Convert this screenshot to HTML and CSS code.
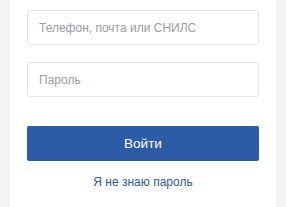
FILE: index.html
```html
<!DOCTYPE html>
<html lang="ru">
<head>
    <meta charset="UTF-8">
    <meta name="viewport" content="width=device-width, initial-scale=1.0">
    <title>Вход</title>
    <link rel="stylesheet" href="styles.css">
</head>
<body>
    <div class="card">
        <input type="text" class="field" placeholder="Телефон, почта или СНИЛС">
        <input type="password" class="field" placeholder="Пароль">
        <button class="login">Войти</button>
        <a href="#" class="forgot">Я не знаю пароль</a>
    </div>
</body>
</html>
```

FILE: styles.css
```css
body {
    margin: 0;
    background-color: #f4f5f7;
    font-family: "Liberation Sans", Arial, sans-serif;
}
.card {
    margin: 0 10px;
    height: 207px;
    background: white;
    padding: 10px 17px 0;
    box-sizing: border-box;
    display: flex;
    flex-direction: column;
}
.field {
    height: 35px;
    box-sizing: border-box;
    padding: 0 11px;
    border: 1px solid #e3e5ea;
    border-radius: 3px;
    font-family: inherit;
    font-size: 12px;
    color: #333;
    outline: none;
}
.field::placeholder {
    color: #9b9da2;
}
.field + .field {
    margin-top: 17px;
}
.login {
    margin-top: 29px;
    height: 35px;
    border: none;
    border-radius: 2px;
    background: #2c5ca8;
    color: white;
    font-family: inherit;
    font-size: 13.5px;
    cursor: pointer;
}
.forgot {
    margin-top: 14px;
    text-align: center;
    font-size: 12px;
    color: #2d5a9c;
    text-decoration: none;
}
```
